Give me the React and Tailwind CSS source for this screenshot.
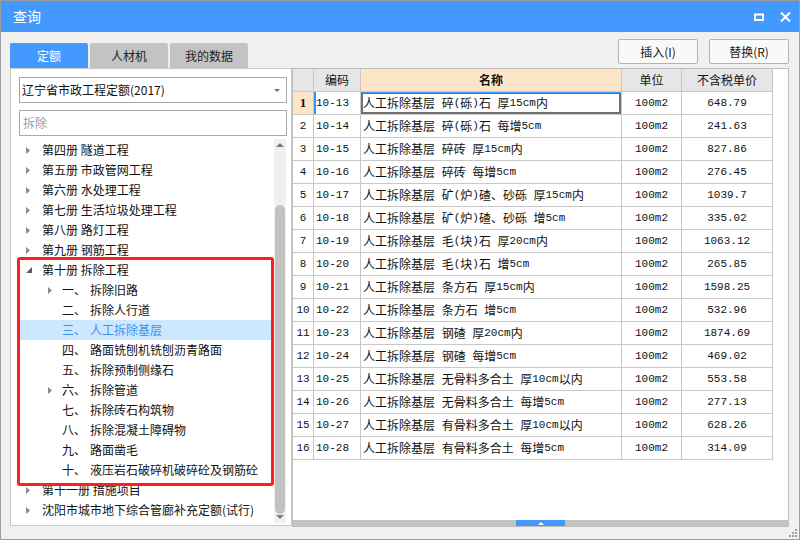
import React from "react";

const rows = [
  ["10-13", "人工拆除基层 碎(砾)石 厚15cm内", "648.79"],
  ["10-14", "人工拆除基层 碎(砾)石 每增5cm", "241.63"],
  ["10-15", "人工拆除基层 碎砖 厚15cm内", "827.86"],
  ["10-16", "人工拆除基层 碎砖 每增5cm", "276.45"],
  ["10-17", "人工拆除基层 矿(炉)碴、砂砾 厚15cm内", "1039.7"],
  ["10-18", "人工拆除基层 矿(炉)碴、砂砾 增5cm", "335.02"],
  ["10-19", "人工拆除基层 毛(块)石 厚20cm内", "1063.12"],
  ["10-20", "人工拆除基层 毛(块)石 增5cm", "265.85"],
  ["10-21", "人工拆除基层 条方石 厚15cm内", "1598.25"],
  ["10-22", "人工拆除基层 条方石 增5cm", "532.96"],
  ["10-23", "人工拆除基层 钢碴 厚20cm内", "1874.69"],
  ["10-24", "人工拆除基层 钢碴 每增5cm", "469.02"],
  ["10-25", "人工拆除基层 无骨料多合土 厚10cm以内", "553.58"],
  ["10-26", "人工拆除基层 无骨料多合土 每增5cm", "277.13"],
  ["10-27", "人工拆除基层 有骨料多合土 厚10cm以内", "628.26"],
  ["10-28", "人工拆除基层 有骨料多合土 每增5cm", "314.09"],
];

const books = [
  "第四册 隧道工程",
  "第五册 市政管网工程",
  "第六册 水处理工程",
  "第七册 生活垃圾处理工程",
  "第八册 路灯工程",
  "第九册 钢筋工程",
];

const chapters = [
  ["一、", "拆除旧路", true],
  ["二、", "拆除人行道"],
  ["三、", "人工拆除基层", false, true],
  ["四、", "路面铣刨机铣刨沥青路面"],
  ["五、", "拆除预制侧缘石"],
  ["六、", "拆除管道", true],
  ["七、", "拆除砖石构筑物"],
  ["八、", "拆除混凝土障碍物"],
  ["九、", "路面凿毛"],
  ["十、", "液压岩石破碎机破碎砼及钢筋砼"],
];

// ascii runs get the narrow mono face, like the old SimSun grid
function Mixed({ text }) {
  const parts = text.split(/([\x20-\x7e]+)/);
  return parts.map((p, i) =>
    /^[\x20-\x7e]+$/.test(p) ? (
      <span key={i} className="font-['Liberation_Mono',monospace] text-[11px] whitespace-pre">
        {p}
      </span>
    ) : (
      <span key={i}>{p}</span>
    )
  );
}

function RightArrow() {
  return (
    <svg width="4" height="7" viewBox="0 0 4 7">
      <path d="M0 0 L4 3.5 L0 7 Z" fill="#8a8a8a" />
    </svg>
  );
}

function OpenArrow() {
  return (
    <svg width="6" height="6" viewBox="0 0 6 6">
      <path d="M6 0 L6 6 L0 6 Z" fill="#5e5e5e" />
    </svg>
  );
}

function TreeRoot({ label, open }) {
  return (
    <div className="flex h-[20px] items-center">
      <span className="flex w-[22px] pl-[6px]">{open ? <OpenArrow /> : <RightArrow />}</span>
      <span>{label}</span>
    </div>
  );
}

const cell = "border-r border-b border-[#c8c8c8] flex items-center";
const mono = "font-['Liberation_Mono',monospace] text-[11px]";

export default function App() {
  return (
    <div className="relative flex h-[540px] w-[800px] flex-col overflow-hidden border border-[#9c9c9c] bg-[#f0f0f0] font-['Noto_Sans_CJK_SC',sans-serif] text-[12px] text-[#111]">
      {/* title bar */}
      <div className="flex h-[31px] shrink-0 items-center justify-between bg-[#4499ff] pl-[12px] pr-[8px] text-white">
        <span className="text-[14px]">查询</span>
        <div className="flex items-center gap-[16px]">
          <svg width="10" height="8" viewBox="0 0 10 8">
            <rect x="1" y="1.5" width="8" height="5.5" fill="none" stroke="white" strokeWidth="2" />
          </svg>
          <svg width="11" height="10" viewBox="0 0 11 10">
            <path d="M1 0.5 L10 9.5 M10 0.5 L1 9.5" stroke="white" strokeWidth="2" />
          </svg>
        </div>
      </div>

      <div className="flex flex-1 flex-col pl-[9px] pr-[10px]">
        {/* tabs + buttons */}
        <div className="flex h-[36px] shrink-0 justify-between">
          <div className="mt-[11px] flex gap-[2px]">
            <div className="flex h-[25px] w-[78px] items-center justify-center rounded-t-[2px] bg-[#4499ff] text-white">定额</div>
            <div className="flex h-[25px] w-[78px] items-center justify-center rounded-t-[2px] bg-[#c3c3c3] text-[#222]">人材机</div>
            <div className="flex h-[25px] w-[78px] items-center justify-center rounded-t-[2px] bg-[#c3c3c3] text-[#222]">我的数据</div>
          </div>
          <div className="mt-[7px] flex gap-[11px]">
            <button className="h-[25px] w-[80px] rounded-[2px] border border-[#b4b4b4] bg-[#f9f9f9] text-[#222]">插入(I)</button>
            <button className="h-[25px] w-[80px] rounded-[2px] border border-[#b4b4b4] bg-[#f9f9f9] text-[#222]">替换(R)</button>
          </div>
        </div>

        <div className="flex h-[459px]">
          {/* left panel */}
          <div className="relative flex h-[458px] w-[282px] shrink-0 flex-col border border-[#c8c8c8] bg-white pl-[8px] pr-[4px] pt-[8px]">
            <div className="flex h-[26px] shrink-0 items-center justify-between border border-[#a9a9a9] pl-[2px] pr-[6px]">
              <span>辽宁省市政工程定额(2017)</span>
              <svg width="6" height="3" viewBox="0 0 6 3">
                <path d="M0 0 L6 0 L3 3 Z" fill="#707070" />
              </svg>
            </div>
            <div className="mt-[7px] flex h-[26px] shrink-0 items-center border border-[#a9a9a9] pl-[3px] text-[#9a9a9a]">拆除</div>

            <div className="mt-[3px] flex h-[384px]">
              <div className="ml-[1px] flex-1 overflow-hidden pt-[1px]">
                {books.map((b) => (
                  <TreeRoot key={b} label={b} />
                ))}
                <TreeRoot label="第十册 拆除工程" open />
                {chapters.map(([n, t, arrow, sel]) => (
                  <div
                    key={n}
                    className={`flex h-[20px] items-center pl-[22px] ${sel ? "bg-[#cce8ff] text-[#3d8ef0]" : ""}`}
                  >
                    <span className="flex w-[20px] pl-[6px]">{arrow && <RightArrow />}</span>
                    <span className="w-[28px]">{n}</span>
                    <span>{t}</span>
                  </div>
                ))}
                <TreeRoot label="第十一册 措施项目" />
                <TreeRoot label="沈阳市城市地下综合管廊补充定额(试行)" />
              </div>
              <div className="mr-[1px] flex w-[12px] flex-col items-center bg-[#f0f0f0] py-[4px]">
                <svg width="8" height="4" viewBox="0 0 8 4">
                  <path d="M0 4 L4 0 L8 4 Z" fill="#7a7a7a" />
                </svg>
                <div className="mt-[58px] h-[309px] w-[10px] rounded-full bg-[#c2c2c2]" />
                <div className="flex-1" />
                <svg width="8" height="4" viewBox="0 0 8 4">
                  <path d="M0 0 L8 0 L4 4 Z" fill="#7a7a7a" />
                </svg>
              </div>
            </div>

            {/* red annotation box */}
            <div className="absolute left-[6px] top-[188px] h-[229px] w-[257px] rounded-[3px] border-[3px] border-[#ff1f1f]" />
          </div>

          {/* right panel */}
          <div className="flex flex-1 flex-col border border-[#bdbdbd] bg-white">
            <div className="flex-1">
              <div className="grid h-[23px] w-[480px] grid-cols-[21px_47px_261px_60px_91px] bg-[#e6e6e6]">
                <div className={cell} />
                <div className={`${cell} justify-center`}>编码</div>
                <div className={`${cell} justify-center bg-[#fde6c8] font-bold`}>名称</div>
                <div className={`${cell} justify-center`}>单位</div>
                <div className={`${cell} justify-center`}>不含税单价</div>
              </div>
              {rows.map(([code, name, price], i) => (
                <div key={code} className="grid h-[23px] w-[480px] grid-cols-[21px_47px_261px_60px_91px]">
                  <div
                    className={`${cell} justify-center ${
                      i === 0 ? "bg-[#fde6c8] font-['Liberation_Serif',serif] text-[13px] font-bold" : mono
                    }`}
                  >
                    {i + 1}
                  </div>
                  <div className={`${cell} pl-[2px] ${mono} ${i === 0 ? "shadow-[inset_2px_0_0_#3d8ef0]" : ""}`}>
                    {code}
                  </div>
                  <div
                    className={`${cell} pl-[2px] ${
                      i === 0 ? "shadow-[inset_0_1px_0_#4499ff,inset_0_0_0_2px_#707070]" : ""
                    }`}
                  >
                    <Mixed text={name} />
                  </div>
                  <div className={`${cell} justify-center ${mono}`}>100m2</div>
                  <div className={`${cell} justify-center ${mono}`}>{price}</div>
                </div>
              ))}
            </div>
            <div className="flex h-[6px] shrink-0 justify-center bg-[#c3c3c3]">
              <div className="flex w-[49px] items-center justify-center bg-[#4499ff]">
                <svg width="6" height="3" viewBox="0 0 6 3">
                  <path d="M0 3 L3 0 L6 3 Z" fill="white" />
                </svg>
              </div>
            </div>
          </div>
        </div>
      </div>

      {/* resize grip */}
      <svg className="absolute bottom-[2px] right-[2px]" width="8" height="8" viewBox="0 0 8 8">
        <rect x="6" y="0" width="2" height="2" fill="#a0a0a0" />
        <rect x="3" y="3" width="2" height="2" fill="#a0a0a0" />
        <rect x="6" y="3" width="2" height="2" fill="#a0a0a0" />
        <rect x="0" y="6" width="2" height="2" fill="#a0a0a0" />
        <rect x="3" y="6" width="2" height="2" fill="#a0a0a0" />
        <rect x="6" y="6" width="2" height="2" fill="#a0a0a0" />
      </svg>
    </div>
  );
}
